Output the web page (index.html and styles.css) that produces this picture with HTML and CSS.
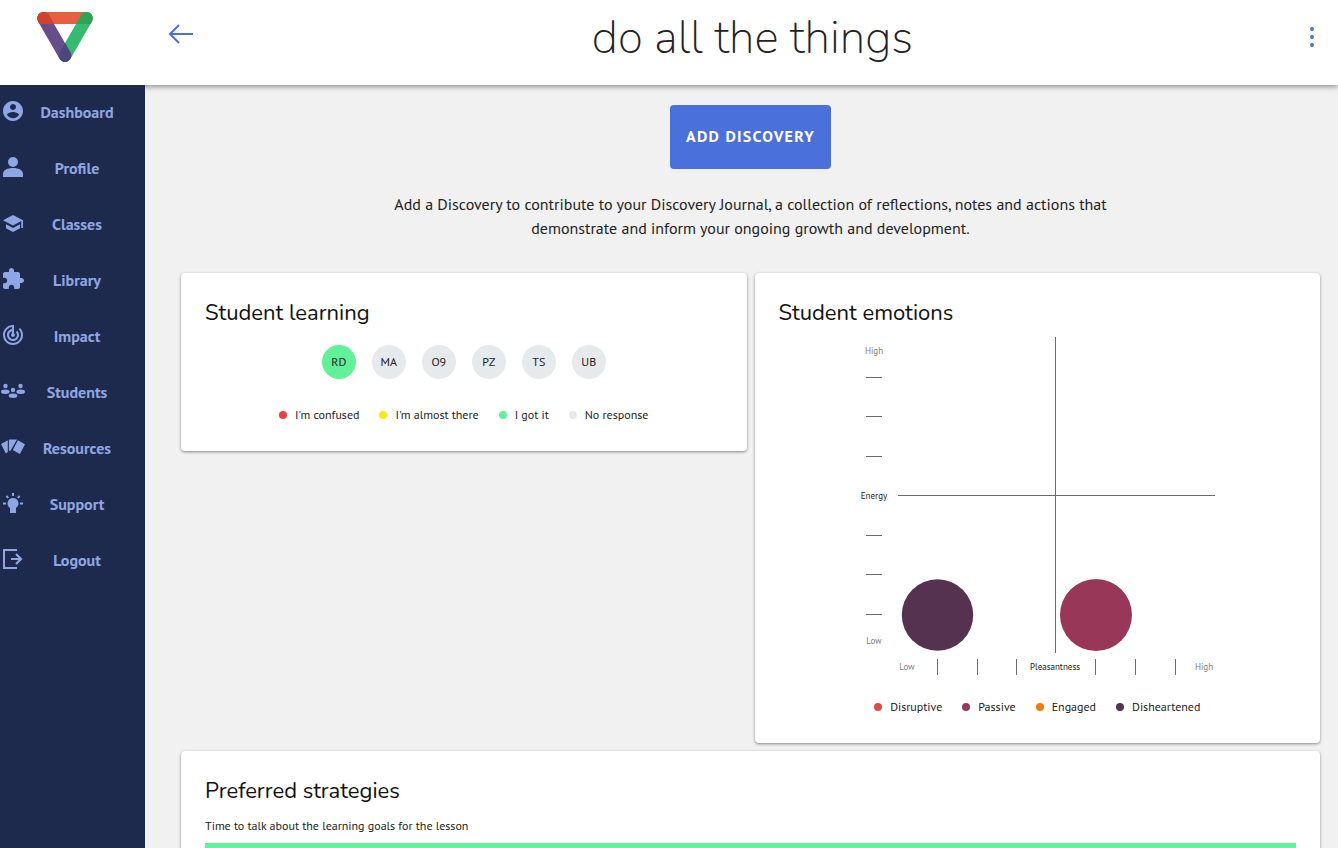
FILE: index.html
```html
<!DOCTYPE html>
<html lang="en">
<head>
    <meta charset="UTF-8">
    <meta name="viewport" content="width=device-width, initial-scale=1.0">
    <title>do all the things</title>
    <link rel="stylesheet" href="styles.css">
</head>
<body>
    <header class="header">
        <a class="logo" href="#" aria-label="Home">
            <svg width="58" height="52" viewBox="0 0 58 52" fill="none" stroke-width="12.6" stroke-linecap="round">
                <defs>
                    <clipPath id="topBar"><rect x="0" y="0" width="58" height="13"/></clipPath>
                    <mask id="leftBar" maskUnits="userSpaceOnUse" x="0" y="0" width="58" height="52">
                        <path d="M7.5 7.3 29 44.7" stroke="#fff"/>
                    </mask>
                </defs>
                <path d="M7.5 7H50.5" stroke="#e95d40" stroke-width="12"/>
                <path d="M50.5 7.3 29 44.7" stroke="#35bb70"/>
                <path d="M7.5 7.3 29 44.7" stroke="#664e8c"/>
                <path d="M50.5 7.3 29 44.7" stroke="#4b467b" mask="url(#leftBar)"/>
                <path d="M7.5 7.3 29 44.7" stroke="#cf432d" clip-path="url(#topBar)"/>
                <path d="M50.5 7.3 29 44.7" stroke="#31a356" clip-path="url(#topBar)"/>
            </svg>
        </a>
        <div class="toolbar">
            <button class="icon-button" type="button" aria-label="Back">
                <svg width="26" height="22" viewBox="0 0 26 22" fill="none" stroke="#4a70dc" stroke-width="2"><path d="M25 11H2M11 2 2 11 11 20"/></svg>
            </button>
            <h1>do all the things</h1>
            <button class="icon-button" type="button" aria-label="More">
                <svg width="6" height="22" viewBox="0 0 6 22" fill="#4a70dc"><circle cx="3" cy="3" r="2"/><circle cx="3" cy="11" r="2"/><circle cx="3" cy="19" r="2"/></svg>
            </button>
        </div>
    </header>

    <div class="layout">
        <nav class="sidebar">
            <a href="#">
                <svg viewBox="0 0 24 24"><path d="M12 2C6.480 2 2 6.480 2 12s4.480 10 10 10 10-4.480 10-10S17.520 2 12 2zm0 3c1.660 0 3 1.340 3 3s-1.340 3-3 3-3-1.340-3-3 1.340-3 3-3zm0 14.200c-2.500 0-4.710-1.280-6-3.220.030-1.990 4-3.080 6-3.080 1.990 0 5.970 1.090 6 3.080-1.290 1.940-3.500 3.220-6 3.220z"/></svg>
                <span>Dashboard</span>
            </a>
            <a href="#">
                <svg viewBox="0 0 24 24"><circle cx="12" cy="7" r="5"/><path d="M2 22v-3c0-4 4.500-6 10-6s10 2 10 6v3z"/></svg>
                <span>Profile</span>
            </a>
            <a href="#">
                <svg viewBox="0 0 24 24"><path d="M5 13.180v4L12 21l7-3.820v-4L12 17l-7-3.820zM12 4 2 9.200l10 5.300 8.300-4.400V17H22V9.200L12 4z"/></svg>
                <span>Classes</span>
            </a>
            <a href="#">
                <svg viewBox="0 0 24 24"><path d="M20.500 11H19V7c0-1.100-.9-2-2-2h-4V3.500C13 2.120 11.880 1 10.500 1S8 2.120 8 3.500V5H4c-1.100 0-1.990.9-1.990 2v3.800H3.500c1.490 0 2.700 1.210 2.700 2.700s-1.210 2.700-2.700 2.700H2V20c0 1.100.9 2 2 2h3.800v-1.500c0-1.490 1.210-2.700 2.700-2.700 1.490 0 2.700 1.210 2.700 2.700V22H17c1.100 0 2-.9 2-2v-4h1.500c1.380 0 2.500-1.120 2.500-2.500S21.880 11 20.500 11z"/></svg>
                <span>Library</span>
            </a>
            <a href="#">
                <svg viewBox="0 0 24 24"><path d="M19.070 4.930l-1.410 1.410C19.100 7.790 20 9.790 20 12c0 4.420-3.580 8-8 8s-8-3.580-8-8c0-4.080 3.050-7.440 7-7.930v2.020C8.160 6.570 6 9.030 6 12c0 3.310 2.690 6 6 6s6-2.690 6-6c0-1.660-.67-3.160-1.760-4.240l-1.410 1.410C15.550 9.900 16 10.900 16 12c0 2.210-1.790 4-4 4s-4-1.790-4-4c0-1.860 1.280-3.410 3-3.860v2.140c-.6.350-1 .98-1 1.720 0 1.100.9 2 2 2s2-.9 2-2c0-.74-.4-1.380-1-1.720V2h-1C6.480 2 2 6.480 2 12s4.480 10 10 10 10-4.480 10-10c0-2.760-1.120-5.260-2.930-7.070z"/></svg>
                <span>Impact</span>
            </a>
            <a href="#">
                <svg viewBox="0 0 24 24"><circle cx="4.500" cy="7" r="2.200"/><circle cx="19.500" cy="7" r="2.200"/><circle cx="12" cy="11" r="2.200"/><ellipse cx="4.300" cy="12.700" rx="4.300" ry="2.200"/><ellipse cx="19.700" cy="12.700" rx="4.300" ry="2.200"/><ellipse cx="12" cy="16.700" rx="4.300" ry="2.200"/></svg>
                <span>Students</span>
            </a>
            <a href="#">
                <svg viewBox="0 0 24 24"><path d="M0 9 6.800 5.200V17L4.900 18.400zM7.900 4.600H16L9.500 15.800H7.900zM16.900 5.200 24 9.300 18.900 19 11.800 15z"/></svg>
                <span>Resources</span>
            </a>
            <a href="#">
                <svg viewBox="0 0 24 24"><path d="M12 7a5.500 5.500 0 0 1 3 10.100V22H9v-4.900A5.500 5.500 0 0 1 12 7zM11 2h2v3h-2zM2 11.500h3v2H2zM19 11.500h3v2h-3zM4.700 5.700l1.400-1.400 1.900 1.900-1.400 1.400zM16 6.200l1.900-1.900 1.400 1.400-1.900 1.900z"/></svg>
                <span>Support</span>
            </a>
            <a href="#">
                <svg viewBox="0 0 24 24"><path d="M2 2h14v2H4v16h12v2H2zM10 11h7.500l-3.300-3.300 1.600-1.500L21.500 12l-5.700 5.800-1.600-1.500 3.300-3.300H10z"/></svg>
                <span>Logout</span>
            </a>
        </nav>

        <main class="content">
            <div class="intro">
                <button class="add-button" type="button">ADD DISCOVERY</button>
                <p>Add a Discovery to contribute to your Discovery Journal, a collection of reflections, notes and actions that demonstrate and inform your ongoing growth and development.</p>
            </div>

            <div class="cards">
                <section class="card">
                    <h2>Student learning</h2>
                    <div class="avatars">
                        <span class="avatar got-it">RD</span>
                        <span class="avatar">MA</span>
                        <span class="avatar">O9</span>
                        <span class="avatar">PZ</span>
                        <span class="avatar">TS</span>
                        <span class="avatar">UB</span>
                    </div>
                    <ul class="legend">
                        <li class="confused">I'm confused</li>
                        <li class="almost">I'm almost there</li>
                        <li class="got">I got it</li>
                        <li class="none">No response</li>
                    </ul>
                </section>

                <section class="card">
                    <h2>Student emotions</h2>
                    <svg class="chart" width="376" height="342" viewBox="0 0 376 342">
                        <g stroke="#6b6b6b" shape-rendering="crispEdges">
                            <path d="M206.500 0V316M49 158.500H366"/>
                            <path d="M17 40.500h16M17 79.500h16M17 119.500h16M17 198.500h16M17 237.500h16M17 277.500h16"/>
                            <path d="M88.500 322v16M128.500 322v16M167.500 322v16M246.500 322v16M286.500 322v16M326.500 322v16"/>
                        </g>
                        <g class="axis-label">
                            <text x="25" y="17">High</text>
                            <text x="25" y="162" class="axis-name">Energy</text>
                            <text x="25" y="307">Low</text>
                            <text x="58" y="333">Low</text>
                            <text x="206" y="333" class="axis-name">Pleasantness</text>
                            <text x="355" y="333">High</text>
                        </g>
                        <circle cx="88.500" cy="278" r="35.700" fill="#553350"/>
                        <circle cx="247" cy="278" r="36" fill="#993759"/>
                    </svg>
                    <ul class="legend">
                        <li class="disruptive">Disruptive</li>
                        <li class="passive">Passive</li>
                        <li class="engaged">Engaged</li>
                        <li class="disheartened">Disheartened</li>
                    </ul>
                </section>

                <section class="card wide">
                    <h2>Preferred strategies</h2>
                    <p class="strategy">Time to talk about the learning goals for the lesson</p>
                    <div class="bar"></div>
                </section>
            </div>
        </main>
    </div>
</body>
</html>
```
FILE: styles.css
```css
* {
    box-sizing: border-box;
}
body {
    margin: 0;
    height: 100vh;
    display: flex;
    flex-direction: column;
    overflow: hidden;
    background: #f1f1f1;
    color: #222;
    font-family: "PT Sans", Lato, sans-serif;
    font-size: 16px;
    line-height: 24px;
}
h1, h2, p, ul {
    margin: 0;
    padding: 0;
}
button {
    border: none;
    font-family: inherit;
    cursor: pointer;
}
.header {
    flex: none;
    display: flex;
    height: 85px;
    background: white;
    box-shadow: 0 1px 6px rgba(0, 0, 0, 0.5);
}
.logo {
    width: 145px;
    padding: 11px 36px;
}
.logo svg {
    display: block;
}
.toolbar {
    flex: 1;
    display: flex;
    justify-content: space-between;
    align-items: flex-start;
    padding: 7px 18px 0 16px;
}
.icon-button {
    display: flex;
    justify-content: center;
    width: 40px;
    padding: 16px 0;
    background: none;
}
.icon-button:last-child {
    width: 16px;
    padding: 19px 0;
}
h1 {
    font-family: Nunito, Lato, sans-serif;
    font-size: 46px;
    font-weight: 200;
    line-height: 62px;
}
.layout {
    flex: 1;
    display: flex;
    min-height: 0;
}
.sidebar {
    position: relative;
    flex: none;
    width: 145px;
    background: #1e2a4d;
}
.sidebar a {
    display: flex;
    align-items: center;
    height: 56px;
    padding: 0 16px 0 1px;
    color: #8ea6e3;
    font-weight: bold;
    text-decoration: none;
}
.sidebar svg {
    flex: none;
    width: 24px;
    height: 24px;
    margin-bottom: 4px;
    fill: #8ea6e3;
}
.sidebar span {
    flex: 1;
    margin-bottom: 2px;
    text-align: center;
}
.content {
    flex: 1;
    padding: 20px 18px 24px 36px;
    overflow-y: auto;
    scrollbar-width: none;
}
.intro {
    display: flex;
    flex-direction: column;
    align-items: center;
    gap: 23px;
    margin-bottom: 33px;
    text-align: center;
}
.intro p {
    max-width: 752px;
}
.add-button {
    height: 64px;
    padding: 0 16px 2px;
    border-radius: 4px;
    background: #4a70dc;
    color: white;
    font-size: 16px;
    font-weight: bold;
    letter-spacing: 0.08em;
}
.cards {
    display: grid;
    grid-template-columns: 1fr 1fr;
    align-items: start;
    gap: 8px;
}
.card {
    padding: 24px;
    border-radius: 4px;
    background: white;
    box-shadow: 0 1px 3px rgba(0, 0, 0, 0.45);
}
.card.wide {
    grid-column: 1 / -1;
}
h2 {
    color: #111;
    font-family: Nunito, Lato, sans-serif;
    font-size: 22px;
    font-weight: 400;
    line-height: 32px;
}
.avatars {
    display: flex;
    justify-content: center;
    gap: 16px;
    margin: 16px 0 24px;
}
.avatar {
    width: 34px;
    height: 34px;
    border-radius: 50%;
    background: #e7eaed;
    font-size: 12px;
    line-height: 34px;
    text-align: center;
}
.avatar.got-it {
    background: #60f19a;
}
.legend {
    display: flex;
    justify-content: center;
    gap: 20px;
    list-style: none;
    font-size: 12px;
}
.legend li {
    display: flex;
    align-items: center;
    gap: 8px;
}
.legend li::before {
    content: "";
    width: 8px;
    height: 8px;
    border-radius: 50%;
    background: currentColor;
}
.legend .confused::before { background: #fb3a44; }
.legend .almost::before { background: #ffe900; }
.legend .got::before { background: #60f19a; }
.legend .none::before { background: #e7eaed; }
.legend .disruptive::before { background: #dc4a43; }
.legend .passive::before { background: #993759; }
.legend .engaged::before { background: #f27c00; }
.legend .disheartened::before { background: #553350; }
.chart {
    display: block;
    margin: 8px auto 16px;
}
.axis-label {
    fill: #808080;
    font-size: 9px;
    text-anchor: middle;
}
.axis-name {
    fill: #222;
}
.strategy {
    margin: 7px 0 5px;
    font-size: 12px;
}
.bar {
    height: 16px;
    background: #60f19a;
}
```
